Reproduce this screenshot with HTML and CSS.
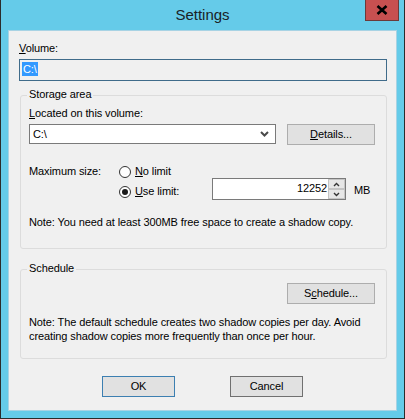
FILE: index.html
```html
<!DOCTYPE html>
<html>
<head>
<meta charset="utf-8">
<link rel="stylesheet" href="styles.css">
</head>
<body>
<div class="window">
  <div class="titlebar">
    <span></span>
    <div class="title">Settings</div>
    <div class="close">
      <svg width="12" height="10" viewBox="0 0 12 10"><path d="M1.5 1 L10.5 9 M10.5 1 L1.5 9" stroke="#000" stroke-width="2.6" fill="none"/></svg>
    </div>
  </div>
  <div class="client">
    <div class="label vol-label"><u>V</u>olume:</div>
    <div class="volume-box"><span class="sel">C:\</span></div>

    <div class="group storage">
      <div class="legend">Storage area</div>
      <div class="label located"><u>L</u>ocated on this volume:</div>
      <div class="combo-row">
        <div class="combo">
          <span>C:\</span>
          <svg class="chev" width="9" height="6" viewBox="0 0 9 6"><path d="M1 1 L4.5 4.5 L8 1" stroke="#4a4a4a" stroke-width="2" fill="none"/></svg>
        </div>
        <div class="btn details"><u>D</u>etails...</div>
      </div>
      <div class="maxsize">
        <div class="label max-label">Maximum size:</div>
        <div class="radios">
          <div class="radio"><span class="circle"></span><span><u>N</u>o limit</span></div>
          <div class="radio"><span class="circle on"></span><span><u>U</u>se limit:</span></div>
        </div>
        <div class="spin">
          <div class="spin-value">12252</div>
          <div class="spin-btns">
            <div class="spin-btn"><svg width="7" height="5" viewBox="0 0 7 5"><path d="M1 4 L3.5 1.5 L6 4" stroke="#333" stroke-width="1.4" fill="none"/></svg></div>
            <div class="spin-btn"><svg width="7" height="5" viewBox="0 0 7 5"><path d="M1 1 L3.5 3.5 L6 1" stroke="#333" stroke-width="1.4" fill="none"/></svg></div>
          </div>
        </div>
        <div class="unit">MB</div>
      </div>
      <div class="note note-storage">Note: You need at least 300MB free space to create a shadow copy.</div>
    </div>

    <div class="group schedule">
      <div class="legend">Schedule</div>
      <div class="sched-row"><div class="btn">S<u>c</u>hedule...</div></div>
      <div class="note note-sched">Note: The default schedule creates two shadow copies per day. Avoid<br>creating shadow copies more frequently than once per hour.</div>
    </div>

    <div class="actions">
      <div class="btn ok">OK</div>
      <div class="btn">Cancel</div>
    </div>
  </div>
</div>
</body>
</html>
```

FILE: styles.css
```css
* { box-sizing: border-box; }
html, body { margin: 0; padding: 0; }
body {
  font-family: "Liberation Sans", Arial, sans-serif;
  font-size: 11px;
  letter-spacing: -0.1px;
  color: #000;
  background: #fff;
}
u { text-decoration: underline; text-underline-offset: 1px; }

.window {
  width: 405px;
  height: 419px;
  background: #65cbe9;
  border: 1px solid #2b2b2b;
  border-top: 0;
  padding: 0 7px 7px;
  display: flex;
  flex-direction: column;
}

.titlebar {
  height: 30px;
  margin: 0 -7px;
  display: grid;
  grid-template-columns: 1fr auto 1fr;
}
.title {
  font-size: 15px;
  letter-spacing: 0;
  line-height: 30px;
  color: #1a2226;
}
.close {
  justify-self: end;
  margin-right: 5px;
  width: 34px;
  height: 21px;
  background: #c75050;
  border: 1px solid #6b3a3a;
  border-top: 0;
  display: flex;
  align-items: center;
  justify-content: center;
}

.client {
  flex: 1;
  background: #f0f0f0;
  border: 1px solid #a8d3e4;
  display: flex;
  flex-direction: column;
}

.label { line-height: 15px; }
.vol-label { margin: 10px 0 0 10px; }

.volume-box {
  margin: 3px 9px 0 10px;
  height: 22px;
  border: 1px solid #3f6b8a;
  background: #f0f0f0;
  padding: 2px 0 0 2px;
}
.sel {
  display: inline-block;
  background: #3399ff;
  color: #fff;
  line-height: 14px;
  padding: 0 1px;
}

.group {
  border: 1px solid #dcdcdc;
  border-radius: 3px;
  margin: 0 9px 0 11px;
  padding: 0 11px 0 8px;
  display: flex;
  flex-direction: column;
}
.storage { margin-top: 14px; padding-bottom: 19px; }
.schedule { margin-top: 20px; padding-bottom: 15px; }

.legend {
  margin-top: -9px;
  margin-left: -2px;
  padding: 0 2px;
  width: max-content;
  background: #f0f0f0;
  line-height: 15px;
}

.located { margin-top: 4px; }

.combo-row {
  margin-top: 3px;
  display: flex;
  justify-content: space-between;
  align-items: flex-start;
}
.combo {
  width: 247px;
  height: 20px;
  border: 1px solid #7a7a7a;
  background: #fff;
  display: flex;
  align-items: center;
  justify-content: space-between;
  padding: 0 6px 0 3px;
}
.chev { display: block; }

.btn {
  height: 21px;
  border: 1px solid #adadad;
  background: #e1e1e1;
  display: flex;
  align-items: center;
  justify-content: center;
  line-height: 15px;
}
.details { width: 88px; }
.sched-row { display: flex; justify-content: flex-end; margin-top: 7px; }
.sched-row .btn { width: 88px; }

.maxsize {
  margin-top: 19px;
  display: flex;
  align-items: flex-start;
}
.max-label { width: 90px; }
.radios {
  width: 93px;
  display: flex;
  flex-direction: column;
  gap: 5px;
}
.radio {
  display: flex;
  align-items: center;
  line-height: 15px;
  gap: 4px;
}
.circle {
  width: 12px;
  height: 12px;
  border-radius: 50%;
  border: 1px solid #333;
  background: #fff;
  display: flex;
  align-items: center;
  justify-content: center;
}
.circle.on::after {
  content: "";
  width: 6px;
  height: 6px;
  border-radius: 50%;
  background: #1a1a1a;
}
.spin {
  margin-top: 14px;
  width: 134px;
  height: 22px;
  display: flex;
  border: 1px solid #7a7a7a;
  background: #fff;
}
.spin-value {
  flex: 1;
  text-align: right;
  line-height: 19px;
  padding-right: 1px;
}
.spin-btns {
  width: 17px;
  display: flex;
  flex-direction: column;
}
.spin-btn {
  flex: 1;
  background: #e6e6e6;
  border: 1px solid #c4c4c4;
  display: flex;
  align-items: center;
  justify-content: center;
}
.unit {
  margin-top: 15px;
  margin-left: 8px;
  line-height: 22px;
}

.note { line-height: 14px; }
.note-storage { margin-top: 14px; }
.note-sched { margin-top: 11px; }

.actions {
  margin-top: 17px;
  display: flex;
  justify-content: center;
  gap: 55px;
}
.actions .btn { width: 73px; }
.ok { border-color: #3c7fb1; }
.actions .btn:not(.ok) { border-color: #707070; }
```
